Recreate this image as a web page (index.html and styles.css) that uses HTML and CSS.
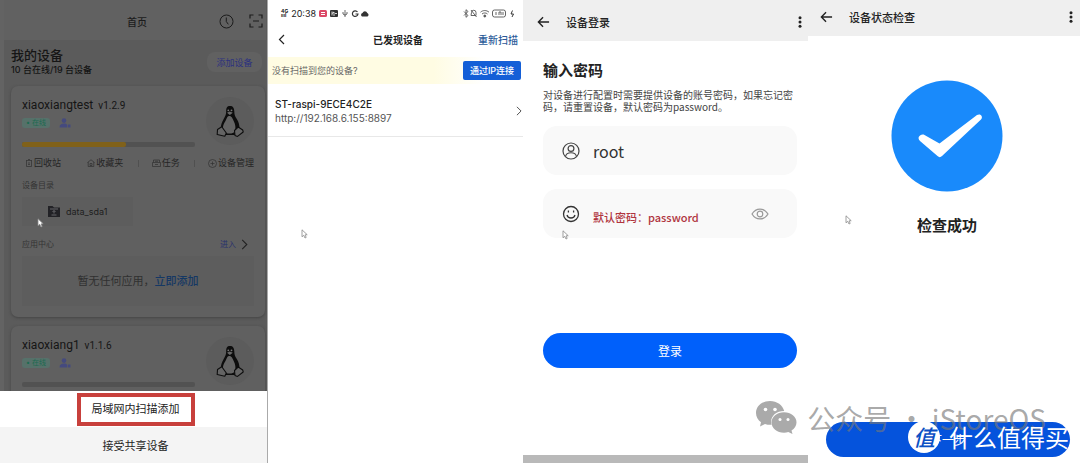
FILE: index.html
```html
<!DOCTYPE html>
<html lang="zh-CN">
<head>
<meta charset="utf-8">
<title>设备添加流程</title>
<link rel="stylesheet" href="styles.css">
</head>
<body>
<svg class="defs" aria-hidden="true">
  <symbol id="tux" viewBox="0 0 28 34">
    <path d="M14 2C11 2 10 4 10.200 7.500c0 3-.9 4.800-2.500 7.500C6 18 4.800 21 4.800 24L8 31h12l3.500-6c.2-3.500-.8-7-2.700-10-1.700-2.700-2.500-4-2.500-7.500C18.200 4 17 2 14 2z" fill="#0d0d0d"/>
    <path d="M13.200 12c-1.800 0-2.300 2-3.500 4.500C8 19.500 6 23 7.500 26.500c1.500 3.500 9.300 4.500 11.500.5 1-3.500.3-6.800-1.200-9.800-1.200-2.600-2-5.200-4.600-5.200z" fill="#646464"/>
    <path d="M11 8.800l2.800-1.300 3 1.300-3 2.200z" fill="#686868"/>
    <circle cx="12.300" cy="6.300" r=".9" fill="#777"/><circle cx="15.500" cy="6.300" r=".9" fill="#777"/>
    <path d="M1.500 25.500l4.300-2.800 4.500 6.300-1.500 3.200L1.200 30.500zM26.700 26l-4.500-3-3.700 3.500.5 5 2.500.9 5.700-4.400z" fill="#646464" stroke="#0d0d0d" stroke-width="1.100" stroke-linejoin="round"/>
  </symbol>
  <symbol id="share" viewBox="0 0 12 10">
    <circle cx="5" cy="2.600" r="2.300"/><path d="M.5 9.500c0-3 2-4 4.500-4 1.500 0 2.500.4 3.300 1.200V9.500zM9 6.500h2.500v3H9z"/>
  </symbol>
  <symbol id="back" viewBox="0 0 14 12">
    <path d="M13 6H1.500M6.500 1l-5 5 5 5" fill="none" stroke="currentColor" stroke-width="1.500"/>
  </symbol>
  <symbol id="more" viewBox="0 0 4 12">
    <g fill="currentColor"><circle cx="2" cy="1.700" r="1.500"/><circle cx="2" cy="6" r="1.500"/><circle cx="2" cy="10.300" r="1.500"/></g>
  </symbol>
  <symbol id="next" viewBox="0 0 7 12">
    <path d="M1 1l5 5-5 5" fill="none" stroke="currentColor" stroke-width="1.200"/>
  </symbol>
  <symbol id="pointer" viewBox="0 0 7 10">
    <path d="M1 .8v7l1.700-1.500L4 9l1.200-.6-1.200-2.500 2.200-.2z" stroke-width=".8"/>
  </symbol>
</svg>

<main class="flow">
  <section class="screen home">
    <header class="home-bar">
      <h1>首页</h1>
      <button class="plain" aria-label="历史"><svg width="15" height="15" viewBox="0 0 15 15" fill="none" stroke="currentColor"><circle cx="7.500" cy="7.500" r="6.500"/><path d="M7.300 3.500v4l2 2.800"/></svg></button>
      <button class="plain" aria-label="扫码"><svg width="14" height="14" viewBox="0 0 14 14" fill="none" stroke="currentColor" stroke-width="1.200"><path d="M1 4.500V1h3.500M9.500 1H13v3.500M13 9.500V13H9.500M4.500 13H1V9.500M4 7h6"/></svg></button>
    </header>
    <div class="summary">
      <div>
        <h2>我的设备</h2>
        <p>10 台在线/19 台设备</p>
      </div>
      <button class="add">添加设备</button>
    </div>

    <article class="card">
      <div class="card-head">
        <div class="card-main">
          <h3>xiaoxiangtest <small>v1.2.9</small></h3>
          <div class="tags"><span class="online">在线</span><svg width="12" height="10"><use href="#share"/></svg></div>
          <div class="meter"><i class="meter-fill"></i></div>
        </div>
        <span class="avatar"><svg width="28" height="34"><use href="#tux"/></svg></span>
      </div>
      <nav class="actions">
        <button class="plain"><svg width="8" height="8" viewBox="0 0 8 8"><path d="M1 1.500h6M1.500 1.500v6h5v-6M3 .5h2M3 4h2M3 5.500h2"/></svg>回收站</button>
        <button class="plain"><svg width="8" height="8" viewBox="0 0 8 8"><path d="M.5 3.500L4 .8l3.500 2.700M1.200 3v4.500h5.600V3M3 4.500h2v2H3z"/></svg>收藏夹</button>
        <button class="plain"><svg width="9" height="8" viewBox="0 0 9 8"><path d="M.5 3.500h8v4h-8zM1.500 3.500V1h6v2.500M3 5.500h3M3 2.300h3"/></svg>任务</button>
        <button class="plain"><svg width="9" height="9" viewBox="0 0 9 9"><circle cx="4.500" cy="4.500" r="4"/><path d="M2.500 4.500h4M4.500 2.500v4"/></svg>设备管理</button>
      </nav>
      <h4>设备目录</h4>
      <button class="folder"><svg width="12" height="11" viewBox="0 0 12 11"><path d="M0 0h4.500L6 1.500h6V11H0z" fill="#222226"/><path d="M2 3h8M6 4.500v3M4.500 6L6 4.500 7.500 6M3.500 9h5" fill="none" stroke="#67676b"/></svg>data_sda1</button>
      <div class="apps-head"><h4>应用中心</h4><a class="enter" href="#">进入 <svg width="7" height="11"><use href="#next"/></svg></a></div>
      <p class="apps">暂无任何应用，<a href="#">立即添加</a></p>
    </article>

    <article class="card">
      <div class="card-head">
        <div class="card-main">
          <h3>xiaoxiang1 <small>v1.1.6</small></h3>
          <div class="tags"><span class="online">在线</span><svg width="12" height="10"><use href="#share"/></svg></div>
          <div class="meter"></div>
        </div>
        <span class="avatar"><svg width="28" height="34"><use href="#tux"/></svg></span>
      </div>
    </article>

    <div class="sheet">
      <button class="sheet-item"><span class="marked">局域网内扫描添加</span></button>
      <button class="sheet-item second">接受共享设备</button>
    </div>
    <svg class="pointer at-home" width="7" height="10"><use href="#pointer"/></svg>
  </section>

  <section class="screen found">
    <div class="status">
      <span class="net">4G<br>ıııl</span><span>20:38</span>
      <svg width="50" height="9" viewBox="0 0 50 9"><rect x="0" y="1" width="8" height="7" rx="1.500" fill="#dc4867"/><path d="M2 3.500h4M2 5.500h4" stroke="#fff"/><rect x="11" y="1" width="8" height="7" rx="1" fill="#303030"/><path d="M13 2.500v4M13 4.500l2-1.500v4M16 4.500h2" stroke="#fff" stroke-width=".8" fill="none"/><path d="M26 1v7M24 3v2l2 1.200L28 5V3" fill="none" stroke="#444" stroke-width=".8"/><path d="M38.500 3A2.800 2.800 0 1 0 39 5h-2.500" fill="none" stroke="#333" stroke-width="1.200"/><path d="M43 7.500a2 2 0 0 1 .5-3.600 2.600 2.600 0 0 1 4.800 0 2 2 0 0 1 .2 3.600z" fill="#333"/></svg>
      <svg class="status-right" width="52" height="9" viewBox="0 0 52 9" fill="none" stroke="#555" stroke-width=".9"><path d="M1 2.500l4 4-2 1.800V.7l2 1.800-4 4M8 6.500h5V3.500a2 2 0 0 0-4.500 0zM8 1l5.500 7M17.500 3.200c2.500-2.200 6-2.200 8.500 0M19 5c1.700-1.400 4-1.400 5.500 0"/><circle cx="21.800" cy="7" r="1" fill="#555"/><rect x="29.500" y="1" width="13" height="7" rx="2"/><path d="M33 3v3M36 6V3h2v3M40 3v3"/><path d="M49.500 1.500L48 5h2.500L49 8" stroke="#222"/></svg>
    </div>
    <header class="found-bar">
      <button class="plain" aria-label="返回"><svg width="7" height="11" viewBox="0 0 7 11"><path d="M6 1L1.500 5.500 6 10" fill="none" stroke="currentColor" stroke-width="1.200"/></svg></button>
      <h1>已发现设备</h1>
      <a href="#">重新扫描</a>
    </header>
    <div class="tip"><p>没有扫描到您的设备?</p><button>通过IP连接</button></div>
    <a class="device" href="#">
      <span><strong>ST-raspi-9ECE4C2E</strong><span class="url">http://192.168.6.155:8897</span></span>
      <svg width="6" height="10"><use href="#next"/></svg>
    </a>
    <svg class="pointer at-found" width="7" height="10"><use href="#pointer"/></svg>
  </section>

  <section class="screen login">
    <header class="bar">
      <button class="plain" aria-label="返回"><svg width="13" height="12"><use href="#back"/></svg></button>
      <h1>设备登录</h1>
      <button class="plain" aria-label="更多"><svg width="4" height="12"><use href="#more"/></svg></button>
    </header>
    <form class="login-form">
      <h2>输入密码</h2>
      <p>对设备进行配置时需要提供设备的账号密码，如果忘记密码，请重置设备，默认密码为password。</p>
      <label class="field">
        <svg width="18" height="18" viewBox="0 0 18 18" fill="none" stroke="#444" stroke-width="1.200"><circle cx="9" cy="9" r="8"/><circle cx="9" cy="6.500" r="2.900"/><path d="M3.500 14.500c1-5 10-5 11 0"/></svg>
        <input type="text" value="root" aria-label="账号">
      </label>
      <label class="field">
        <svg width="18" height="18" viewBox="0 0 18 18" fill="none" stroke="#333" stroke-width="1.300"><circle cx="9" cy="9" r="7.500"/><path d="M5 10c1 4 7 4 8 0"/><path d="M6.400 5.500v2M11.600 5.500v2"/></svg>
        <input class="hint" type="text" placeholder="默认密码：password" aria-label="密码">
        <button type="button" class="plain" aria-label="显示密码"><svg width="18" height="12" viewBox="0 0 18 12" fill="none" stroke="#999" stroke-width="1.200"><path d="M1 6c4-6.600 12-6.600 16 0-4 6.600-12 6.600-16 0z"/><circle cx="9" cy="6" r="2.800"/></svg></button>
      </label>
      <button type="button" class="primary">登录</button>
    </form>
    <div class="home-strip"></div>
    <svg class="pointer at-login" width="7" height="10"><use href="#pointer"/></svg>
  </section>

  <section class="screen done">
    <header class="bar">
      <button class="plain" aria-label="返回"><svg width="13" height="12"><use href="#back"/></svg></button>
      <h1>设备状态检查</h1>
      <button class="plain" aria-label="更多"><svg width="4" height="12"><use href="#more"/></svg></button>
    </header>
    <div class="result">
      <svg width="112" height="112" viewBox="0 0 112 112"><circle cx="56" cy="56" r="55.500" fill="#198afb"/><path d="M29 55.500c-2 1.500-2 3.500 0 5.500l17.500 15c1.500 1.500 3 1.500 4.500 0l39-36.500c2.500-3-.5-6.500-4-4.500L48.500 63.500 33.500 55c-1.500-.8-3-.5-4.500.5z" fill="#fff"/></svg>
      <h2>检查成功</h2>
    </div>
    <button class="primary">下一步</button>
    <svg class="pointer at-done" width="7" height="10"><use href="#pointer"/></svg>
  </section>

  <div class="account">
    <svg width="41" height="34" viewBox="0 0 41 34"><path d="M14 0C6 0 0 5.200 0 12c0 4 2 7 5 9.300L4 25.500l5-2.600c2 .7 4 .9 6.500.8-2-7.500 4-13.700 12.700-13.700C26.800 4.200 21 0 14 0z" fill="#aaa"/><path d="M28 11.300c-7 0-12.500 4.400-12.500 10.200S21 31.700 28 31.700c1.500 0 3-.2 4.300-.6L36.500 33l-1-3.400c3-2 5-4.800 5-8.100 0-5.800-5.500-10.200-12.500-10.200z" fill="#aaa"/><g fill="#fff"><circle cx="9.500" cy="8.500" r="1.800"/><circle cx="19" cy="8.500" r="1.800"/><circle cx="24" cy="18.500" r="1.500"/><circle cx="32" cy="18.500" r="1.500"/></g></svg>
    <span>公众号 · iStoreOS</span>
  </div>
  <div class="brand"><b>值</b><span>什么值得买</span></div>
</main>
</body>
</html>
```
FILE: styles.css
```css
* { box-sizing: border-box; }
body, h1, h2, h3, h4, p { margin: 0; }
body {
  font-family: "Noto Sans CJK SC", sans-serif;
  color: #222;
  background: #fff;
}
button, input { font: inherit; color: inherit; border: 0; padding: 0; background: none; }
button { cursor: pointer; }
a { text-decoration: none; color: inherit; }
svg { display: block; flex: none; }
.defs { position: absolute; width: 0; height: 0; }
.plain { display: flex; align-items: center; }

.flow {
  position: relative;
  display: grid;
  grid-template-columns: 267fr 256fr 285fr 272fr;
  min-height: 100vh;
  overflow: hidden;
}
.screen {
  position: relative;
  display: flex;
  flex-direction: column;
  min-width: 0;
  overflow: hidden;
}
.pointer { position: absolute; fill: #fff; stroke: #888; }

/* Device list, dimmed behind the action sheet */
.home {
  height: 100vh;
  min-height: 463px;
  padding: 0 1px 0 4px;
  background: linear-gradient(90deg, #636363 4px, #5b5b5b 4px);
  color: #151515;
  font-family: Inter, "Noto Sans CJK SC", sans-serif;
}
.home-bar {
  flex: none;
  display: grid;
  grid-template-columns: 1fr auto 1fr auto;
  align-items: center;
  height: 40px;
  padding: 2px 3px 0 0;
  background: #616161;
  color: #1c1c1c;
}
.home-bar h1 { grid-column: 2; padding-left: 36px; font-size: 10px; font-weight: 500; }
.home-bar button { justify-self: end; margin-left: 15px; }
.summary {
  flex: none;
  display: flex;
  align-items: center;
  justify-content: space-between;
  height: 46px;
  padding: 0 4px 2px 7px;
}
.summary h2 { font-size: 13px; line-height: 16px; font-weight: 500; }
.summary p { font-size: 9px; line-height: 14px; font-weight: 500; }
.add {
  width: 55px;
  height: 20px;
  border-radius: 8px;
  background: #616161;
  color: #2c3180;
  font-size: 9px;
}
.card {
  flex: none;
  margin: 0 1px 9px 7px;
  padding: 11px;
  border-radius: 7px;
  background: #606060;
  box-shadow: 0 1px 3px #444;
}
.card-head { display: flex; justify-content: space-between; }
.card-main { flex: 1; }
.card h3 { font-family: Roboto, "Noto Sans CJK SC", sans-serif; font-size: 12px; line-height: 16px; font-weight: 400; }
.card h3 small { margin-left: 2px; font-size: 10px; }
.tags { display: flex; align-items: center; gap: 9px; height: 18px; fill: #454a7e; }
.online {
  padding: 0 4px;
  border-radius: 3px;
  background: #56716a;
  color: #1d6b50;
  font-size: 7px;
  line-height: 10px;
}
.online::before { content: "• "; }
.meter { height: 5px; margin-top: 10px; border-radius: 2px; background: #525252; }
.meter-fill { display: block; width: 60%; height: 5px; border-radius: 2px; background: #80611a; }
.avatar {
  display: grid;
  place-items: center;
  width: 48px;
  height: 48px;
  margin-left: 11px;
  border-radius: 50%;
  background: #5c5c5c;
}
.actions {
  display: flex;
  justify-content: space-between;
  margin-top: 9px;
  padding-left: 3px;
  font-size: 9px;
  line-height: 14px;
  color: #252525;
}
.actions button { gap: 1px; }
.actions button:first-child { margin-right: 12px; }
.actions svg { fill: none; stroke: #303030; stroke-width: 0.7; }
.actions button + button + button::before { content: ""; width: 1px; height: 7px; margin-right: 12px; background: #505050; }
.card h4 { margin-top: 9px; color: #343434; font-size: 8px; line-height: 12px; font-weight: 400; }
.folder {
  display: flex;
  align-items: center;
  justify-content: center;
  gap: 6px;
  width: 48%;
  height: 29px;
  margin-top: 6px;
  background: #5d5d5d;
  color: #202020;
  font-size: 9px;
}
.apps-head { display: flex; align-items: center; justify-content: space-between; margin-top: 12px; }
.card .apps-head h4 { margin: 0; }
.enter { display: flex; align-items: center; gap: 5px; padding-right: 6px; color: #28306c; font-size: 8px; line-height: 12px; }
.enter svg { color: #222; }
.apps {
  margin-top: 6px;
  background: #5d5d5d;
  color: #303030;
  font-size: 11px;
  line-height: 50px;
  text-align: center;
}
.apps a { color: #153864; font-weight: 500; }
.sheet {
  position: absolute;
  inset: auto 0 0;
  background: #fff;
  color: #222;
}
.sheet-item { display: grid; place-items: center; width: 100%; height: 36px; padding-left: 4px; font-size: 11px; }
.marked { padding: 4px 11px; border: 4px solid #c8403c; line-height: 17px; }
.second { background: #f4f4f4; }
.at-home { top: 218px; left: 37px; }

/* Discovered devices */
.found { border-left: 1px solid #aaa; font-family: Inter, "Noto Sans CJK SC", sans-serif; }
.status { display: flex; align-items: center; height: 26px; padding: 0 8px 0 13px; gap: 3px; font-size: 9px; }
.net { font-size: 5px; line-height: 4px; font-weight: 700; }
.status-right { margin-left: auto; }
.found-bar {
  display: grid;
  grid-template-columns: 1fr auto 1fr;
  align-items: center;
  height: 31px;
  padding: 0 5px 5px 10px;
  font-size: 10px;
}
.found-bar h1 { font-size: 10px; font-weight: 700; }
.found-bar a { justify-self: end; color: #2b5b99; font-weight: 500; }
.tip {
  display: flex;
  align-items: center;
  justify-content: space-between;
  height: 27px;
  padding: 0 2px 0 4px;
  background: linear-gradient(90deg, #fffce3 65%, #fff 85%);
  color: #666;
  font-size: 9px;
}
.tip button { width: 58px; height: 19px; border-radius: 2px; background: #145fd7; color: #fff; font-weight: 500; }
.device {
  display: flex;
  align-items: center;
  justify-content: space-between;
  height: 53px;
  padding: 2px 1px 0 7px;
  border-bottom: 1px solid #e8e8e8;
  color: #555;
}
.device strong, .url { display: block; font-size: 10px; line-height: 14px; }
.device strong { color: #222; font-weight: 500; }
.at-found { top: 229px; left: 33px; }

/* App bar shared by login and result screens */
.bar { display: flex; align-items: center; height: 41px; padding: 2px 6px 0 14px; background: #efefef; }
.bar h1 { flex: 1; margin-left: 16px; font-size: 11px; font-weight: 500; }
.primary {
  height: 35px;
  border-radius: 18px;
  background: #0060fb;
  color: #fff;
  font-size: 12px;
}

.login-form { display: flex; flex-direction: column; padding: 18px 11px 0 20px; }
.login-form h2 { font-size: 15px; line-height: 22px; font-weight: 700; }
.login-form p { margin: 8px 0 13px; color: #444; font-size: 10px; line-height: 12px; }
.field {
  display: flex;
  align-items: center;
  gap: 13px;
  height: 49px;
  margin-bottom: 14px;
  padding: 0 28px 0 19px;
  border-radius: 14px;
  background: #f9f9f9;
}
.field input { flex: 1; min-width: 0; color: #333; font-size: 16px; }
.field .hint { font-size: 11px; padding-top: 6px; }
.hint::placeholder { color: #b0353f; opacity: 1; font-weight: 500; }
.login-form .primary { margin-top: 81px; }
.home-strip { height: 8px; margin-top: auto; background: #b9b9b9; }
.at-login { top: 230px; left: 39px; }

.done .bar { height: 36px; padding: 0 7px 2px 12px; }
.result { display: grid; justify-items: center; gap: 22px; margin-top: 44px; padding-left: 6px; }
.result h2 { font-size: 15px; line-height: 22px; font-weight: 700; }
.done .primary { margin: auto 10px 6px 18px; background: #0553dc; }
.at-done { top: 215px; left: 37px; }

/* Marks laid over the finished strip */
.account {
  position: absolute;
  right: 34px;
  bottom: 25px;
  display: flex;
  align-items: center;
  gap: 6px;
  color: rgba(120, 120, 120, 0.65);
  font-size: 28px;
  line-height: 40px;
}
.account svg { margin-right: 4px; }
.brand {
  position: absolute;
  right: 11px;
  bottom: 10px;
  display: flex;
  align-items: center;
  gap: 9px;
  color: #fff;
  font-size: 24px;
  line-height: 32px;
}
.brand b {
  width: 32px;
  height: 32px;
  border-radius: 50%;
  background: #fff;
  color: #0b50c4;
  font-size: 22px;
  line-height: 30px;
  font-style: italic;
  font-weight: 500;
  text-align: center;
}
```
